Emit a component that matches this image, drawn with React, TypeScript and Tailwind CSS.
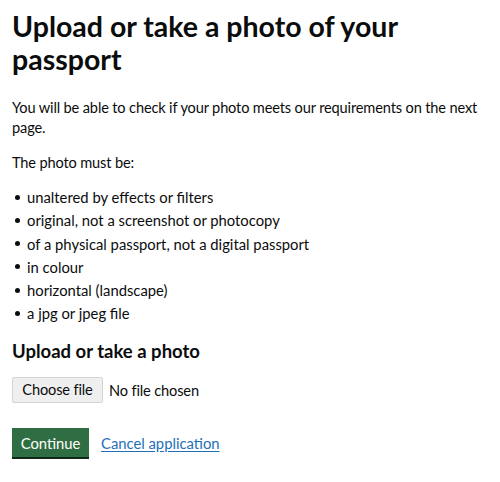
export default function App() {
  const items = [
    "unaltered by effects or filters",
    "original, not a screenshot or photocopy",
    "of a physical passport, not a digital passport",
    "in colour",
    "horizontal (landscape)",
    "a jpg or jpeg file",
  ]

  return (
    <div className="min-h-[482px] bg-white px-3 pt-[10px] text-[#0b0c0c] font-['Lato',Arial,sans-serif]">
      <h1 className="text-[28.5px] font-bold leading-[33px] mb-[22px]">
        Upload or take a photo of your passport
      </h1>

      <p className="text-[14.6px] tracking-[-0.15px] leading-[20px] mb-[15px]">
        You will be able to check if your photo meets our requirements on the next page.
      </p>

      <p className="text-[14.6px] tracking-[-0.15px] leading-[20px] mb-[14px]">The photo must be:</p>

      <ul className="text-[14.8px] leading-[20px] mb-[16px] flex flex-col gap-[3.3px]">
        {items.map(item => (
          <li key={item} className="flex items-center">
            <span className="w-[5px] h-[5px] rounded-full bg-[#0b0c0c] ml-[3px] mr-[7px] shrink-0"></span>
            {item}
          </li>
        ))}
      </ul>

      <h2 className="text-[18.5px] font-bold leading-[24px] mb-[14px]">Upload or take a photo</h2>

      <div className="flex items-center gap-[6px] text-[14.6px] tracking-[-0.15px] mb-[25px]">
        <button className="h-[26px] w-[91px] bg-[#efefef] border border-[#d4d4d4] rounded-[2px] leading-none">
          Choose file
        </button>
        <span>No file chosen</span>
      </div>

      <div className="flex items-center gap-[12px] text-[14.8px]">
        <button className="h-[29px] w-[77px] bg-[#2f6e43] text-white leading-none shadow-[0_2px_0_#0f2a19]">
          Continue
        </button>
        <a href="#" className="text-[#1d70b8] underline underline-offset-2">
          Cancel application
        </a>
      </div>
    </div>
  )
}
